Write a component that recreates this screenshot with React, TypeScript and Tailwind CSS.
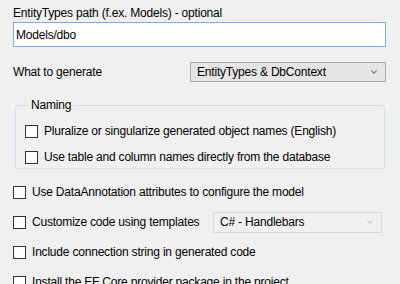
import { ChevronDown } from "lucide-react";

function Check({ label, className = "" }: { label: string; className?: string }) {
  return (
    <div className={`flex items-center h-5 ${className}`}>
      <span className="w-[13px] h-[13px] border border-[#333333] bg-white shrink-0" />
      <span className="ml-[6px] whitespace-nowrap">{label}</span>
    </div>
  );
}

function Combo({ value, disabled = false, className = "" }: { value: string; disabled?: boolean; className?: string }) {
  return (
    <div
      className={`flex items-center justify-between border pl-[6px] pr-[6px] ${
        disabled ? "bg-[#f0f0f0] border-[#d9d9d9]" : "bg-[#e5e5e5] border-[#acacac]"
      } ${className}`}
    >
      <span className="whitespace-nowrap">{value}</span>
      <ChevronDown size={10} strokeWidth={2.5} className={disabled ? "text-[#c4c4c4]" : "text-[#606060]"} />
    </div>
  );
}

export default function App() {
  return (
    <main
      className="w-[400px] h-[284px] overflow-hidden bg-[#f0f0f0] text-black text-[12px] leading-4 tracking-[-0.2px] pl-[13px] pt-[5px]"
      style={{ fontFamily: '"Liberation Sans", Arial, sans-serif' }}
    >
      {/* Output path */}
      <label className="block whitespace-nowrap">EntityTypes path (f.ex. Models) - optional</label>
      <div className="mt-px w-[373px] h-[25px] bg-white border border-[#7aaee2] flex items-center pl-[2px]">
        Models/dbo
      </div>

      {/* What to generate */}
      <div className="flex items-center mt-[15px]">
        <span className="w-[177px]">What to generate</span>
        <Combo value="EntityTypes & DbContext" className="w-[196px] h-5" />
      </div>

      {/* Naming group */}
      <fieldset className="mt-[15px] ml-[2px] w-[370px] border border-[#d5dfe5] rounded-[3px] pl-[9px] pb-px">
        <legend className="ml-[4px] px-[2px]">Naming</legend>
        <Check label="Pluralize or singularize generated object names (English)" className="mt-[8px]" />
        <Check label="Use table and column names directly from the database" className="mt-[6px]" />
      </fieldset>

      {/* Options */}
      <Check label="Use DataAnnotation attributes to configure the model" className="mt-[13px]" />
      <div className="flex items-center mt-[10px] h-5">
        <span className="w-[13px] h-[13px] border border-[#333333] bg-white shrink-0" />
        <span className="ml-[6px] w-[181px] whitespace-nowrap">Customize code using templates</span>
        <Combo value="C# - Handlebars" disabled className="w-[169px] h-[21px]" />
      </div>
      <Check label="Include connection string in generated code" className="mt-[10px]" />
      <Check label="Install the EF Core provider package in the project" className="mt-[10px]" />
    </main>
  );
}
